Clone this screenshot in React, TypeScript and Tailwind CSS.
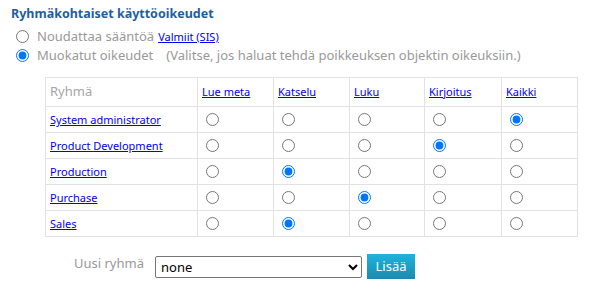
import React, { useState } from 'react';

const columns = ['Lue meta', 'Katselu', 'Luku', 'Kirjoitus', 'Kaikki'];

const initialRows = [
  { name: 'System administrator', value: 4 },
  { name: 'Product Development', value: 3 },
  { name: 'Production', value: 1 },
  { name: 'Purchase', value: 2 },
  { name: 'Sales', value: 1 },
];

export default function App() {
  const [rows, setRows] = useState(initialRows);
  const [mode, setMode] = useState('custom');

  const pick = (i: number, v: number) =>
    setRows((prev) => prev.map((r, idx) => (idx === i ? { ...r, value: v } : r)));

  return (
    <div className="w-[593px] h-[289px] bg-white pl-[11px] pt-[5px] font-['Segoe_UI','Noto_Sans',sans-serif] text-[#999]">
      <h3 className="text-[12.5px] font-bold text-[#1f5f9e] leading-[17px]">Ryhmäkohtaiset käyttöoikeudet</h3>

      <div className="mt-[5px] flex flex-col text-[13px] leading-[19px]">
        <label className="flex items-center">
          <input
            type="radio"
            name="mode"
            checked={mode === 'rule'}
            onChange={() => setMode('rule')}
            className="m-0 ml-[5px] mr-[8px] w-[13px] h-[13px]"
          />
          <span>Noudattaa sääntöä</span>
          <a href="#" className="ml-[4px] text-[11px] text-[#0000ee] underline">Valmiit (SIS)</a>
        </label>
        <label className="flex items-center">
          <input
            type="radio"
            name="mode"
            checked={mode === 'custom'}
            onChange={() => setMode('custom')}
            className="m-0 ml-[5px] mr-[8px] w-[13px] h-[13px]"
          />
          <span>Muokatut oikeudet</span>
          <span className="ml-[13px]">(Valitse, jos haluat tehdä poikkeuksen objektin oikeuksiin.)</span>
        </label>
      </div>

      <table className="ml-[34px] mt-[12px] w-[532px] table-fixed border-collapse border border-[#e2e2e2] text-[11px]">
        <colgroup>
          <col className="w-[152px]" />
          <col className="w-[76px]" />
          <col className="w-[76px]" />
          <col className="w-[75px]" />
          <col className="w-[77px]" />
          <col className="w-[76px]" />
        </colgroup>
        <thead>
          <tr className="h-[29px]">
            <th className="border border-[#e2e2e2] px-[4px] text-left font-normal text-[13px] text-[#a6a6a6]">Ryhmä</th>
            {columns.map((c) => (
              <th key={c} className="border border-[#e2e2e2] px-[4px] text-left font-normal">
                <a href="#" className="text-[#0000ee] underline">{c}</a>
              </th>
            ))}
          </tr>
        </thead>
        <tbody>
          {rows.map((r, i) => (
            <tr key={r.name} className="h-[26px]">
              <td className="border border-[#e2e2e2] px-[4px] pt-[2px]">
                <a href="#" className="text-[#0000ee] underline">{r.name}</a>
              </td>
              {columns.map((c, j) => (
                <td key={c} className="border border-[#e2e2e2] px-[4px]">
                  <input
                    type="radio"
                    name={`row-${i}`}
                    checked={r.value === j}
                    onChange={() => pick(i, j)}
                    className="block m-0 ml-[4px] w-[13px] h-[13px]"
                  />
                </td>
              ))}
            </tr>
          ))}
        </tbody>
      </table>

      <div className="mt-[17px] ml-[63px] flex items-center">
        <span className="w-[81px] text-[13px] -mt-[6px]">Uusi ryhmä</span>
        <select className="w-[207px] h-[22px] border border-[#767676] rounded-[2px] bg-white text-[13px] text-black px-[1px]">
          <option>none</option>
        </select>
        <button className="ml-[5px] w-[48px] h-[25px] bg-gradient-to-b from-[#1fb3dc] to-[#1a8bb0] text-white text-[13px]">
          Lisää
        </button>
      </div>
    </div>
  );
}
